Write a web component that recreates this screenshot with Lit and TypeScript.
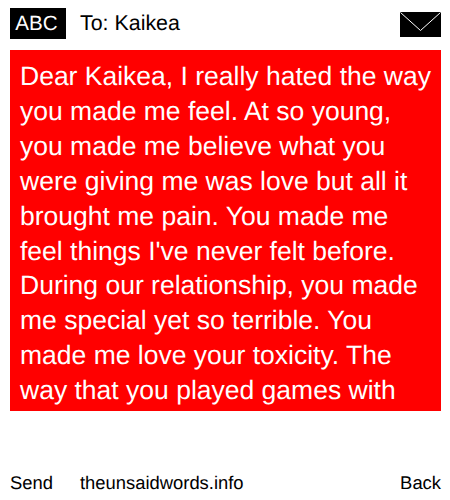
import { LitElement, html, css } from "lit";
import { customElement } from "lit/decorators.js";

@customElement("app-root")
export class AppRoot extends LitElement {
  static styles = css`
    :host { display: block; width: 450px; height: 500px; background: #fff; font-family: "Liberation Sans", Arial, sans-serif; color: #000; overflow: hidden; text-rendering: geometricPrecision; }
    .page { display: flex; flex-direction: column; height: 500px; padding: 8px 9px 0 10px; box-sizing: border-box; }
    .head { display: flex; align-items: center; height: 31px; }
    .abc { background: #000; color: #fff; font-size: 20.6px; width: 53px; padding-right: 3px; height: 31px; display: flex; align-items: center; justify-content: center; }
    .to { margin-left: 14px; font-size: 21.4px; flex: 1; }
    .env { display: block; width: 41px; height: 25px; margin-top: 1px; }
    .msg { margin-top: 11px; background: #f00; color: #fff; font-size: 26.5px; line-height: 34.9px; padding: 9px 10px 0; height: 361px; box-sizing: border-box; overflow: hidden; }
    .foot { margin-top: 61px; display: flex; font-size: 18.4px; line-height: 22px; }
    .send { width: 70px; }
    .site { flex: 1; }
  `;
  render() {
    return html`<div class="page">
      <div class="head">
        <div class="abc">ABC</div>
        <div class="to">To: Kaikea</div>
        <svg class="env" viewBox="0 0 41 25"><rect width="41" height="25" fill="#000"/><path d="M0.5 0.5 L20.5 18.5 L40.5 0.5" fill="none" stroke="#fff" stroke-width="1"/></svg>
      </div>
      <div class="msg">Dear Kaikea, I really hated the way you made me feel. At so young, you made me believe what you were giving me was love but all it brought me pain. You made me feel things I've never felt before. During our relationship, you made me special yet so terrible. You made me love your toxicity. The way that you played games with</div>
      <div class="foot"><div class="send">Send</div><div class="site">theunsaidwords.info</div><div>Back</div></div>
    </div>`;
  }
}
